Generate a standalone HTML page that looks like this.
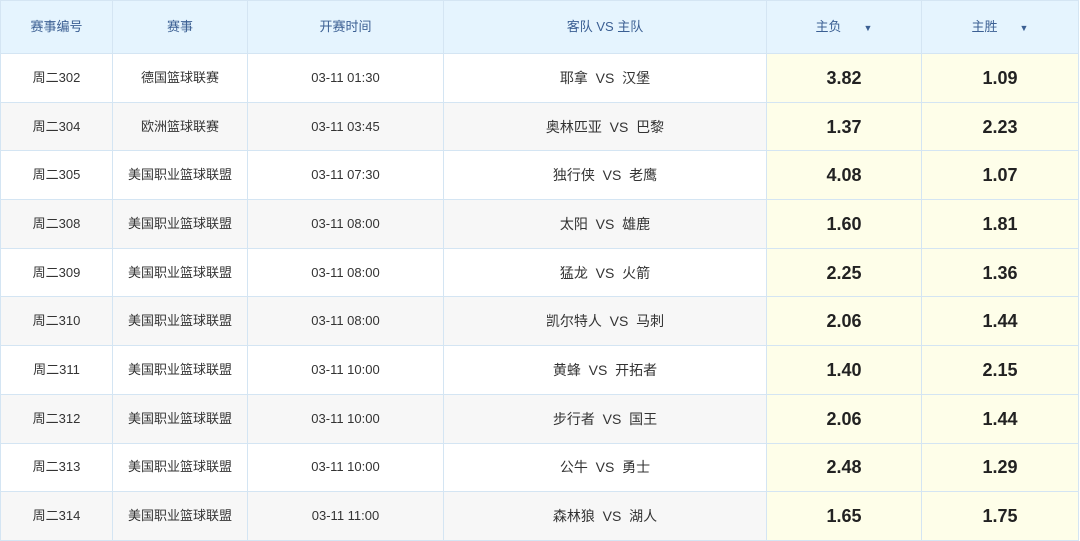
<!DOCTYPE html><html><head><meta charset="utf-8"><style>
body{margin:0;width:1080px;height:540px;overflow:hidden;background:#fff;font-family:"Liberation Sans","Noto Sans CJK SC",sans-serif;}
table{border-collapse:collapse;table-layout:fixed;width:1078px;position:absolute;left:0;top:0}
td,th{border:1px solid #d4e5f3;text-align:center;font-size:13px;color:#333;padding:0;line-height:16px}
th{height:52px;background:#e5f4fe;color:#3b5f93;font-weight:normal}
td{height:47.7px}
tr:nth-child(odd) td{background:#f7f7f7}
td.o{background:#fefee9 !important;font-weight:bold;font-size:18px;color:#222}
td.m{font-size:14px}
.a{font-size:9px;margin-left:22px}
</style></head><body><table>
<colgroup><col style="width:112px"><col style="width:135px"><col style="width:196px"><col style="width:323px"><col style="width:155px"><col style="width:157px"></colgroup>
<tr><th>赛事编号</th><th>赛事</th><th>开赛时间</th><th>客队 VS 主队</th><th>主负<span class="a">▼</span></th><th>主胜<span class="a">▼</span></th></tr>
<tr><td>周二302</td><td>德国篮球联赛</td><td>03-11 01:30</td><td class="m">耶拿&nbsp;&nbsp;VS&nbsp;&nbsp;汉堡</td><td class="o">3.82</td><td class="o">1.09</td></tr>
<tr><td>周二304</td><td>欧洲篮球联赛</td><td>03-11 03:45</td><td class="m">奥林匹亚&nbsp;&nbsp;VS&nbsp;&nbsp;巴黎</td><td class="o">1.37</td><td class="o">2.23</td></tr>
<tr><td>周二305</td><td>美国职业篮球联盟</td><td>03-11 07:30</td><td class="m">独行侠&nbsp;&nbsp;VS&nbsp;&nbsp;老鹰</td><td class="o">4.08</td><td class="o">1.07</td></tr>
<tr><td>周二308</td><td>美国职业篮球联盟</td><td>03-11 08:00</td><td class="m">太阳&nbsp;&nbsp;VS&nbsp;&nbsp;雄鹿</td><td class="o">1.60</td><td class="o">1.81</td></tr>
<tr><td>周二309</td><td>美国职业篮球联盟</td><td>03-11 08:00</td><td class="m">猛龙&nbsp;&nbsp;VS&nbsp;&nbsp;火箭</td><td class="o">2.25</td><td class="o">1.36</td></tr>
<tr><td>周二310</td><td>美国职业篮球联盟</td><td>03-11 08:00</td><td class="m">凯尔特人&nbsp;&nbsp;VS&nbsp;&nbsp;马刺</td><td class="o">2.06</td><td class="o">1.44</td></tr>
<tr><td>周二311</td><td>美国职业篮球联盟</td><td>03-11 10:00</td><td class="m">黄蜂&nbsp;&nbsp;VS&nbsp;&nbsp;开拓者</td><td class="o">1.40</td><td class="o">2.15</td></tr>
<tr><td>周二312</td><td>美国职业篮球联盟</td><td>03-11 10:00</td><td class="m">步行者&nbsp;&nbsp;VS&nbsp;&nbsp;国王</td><td class="o">2.06</td><td class="o">1.44</td></tr>
<tr><td>周二313</td><td>美国职业篮球联盟</td><td>03-11 10:00</td><td class="m">公牛&nbsp;&nbsp;VS&nbsp;&nbsp;勇士</td><td class="o">2.48</td><td class="o">1.29</td></tr>
<tr><td>周二314</td><td>美国职业篮球联盟</td><td>03-11 11:00</td><td class="m">森林狼&nbsp;&nbsp;VS&nbsp;&nbsp;湖人</td><td class="o">1.65</td><td class="o">1.75</td></tr>
</table></body></html>
